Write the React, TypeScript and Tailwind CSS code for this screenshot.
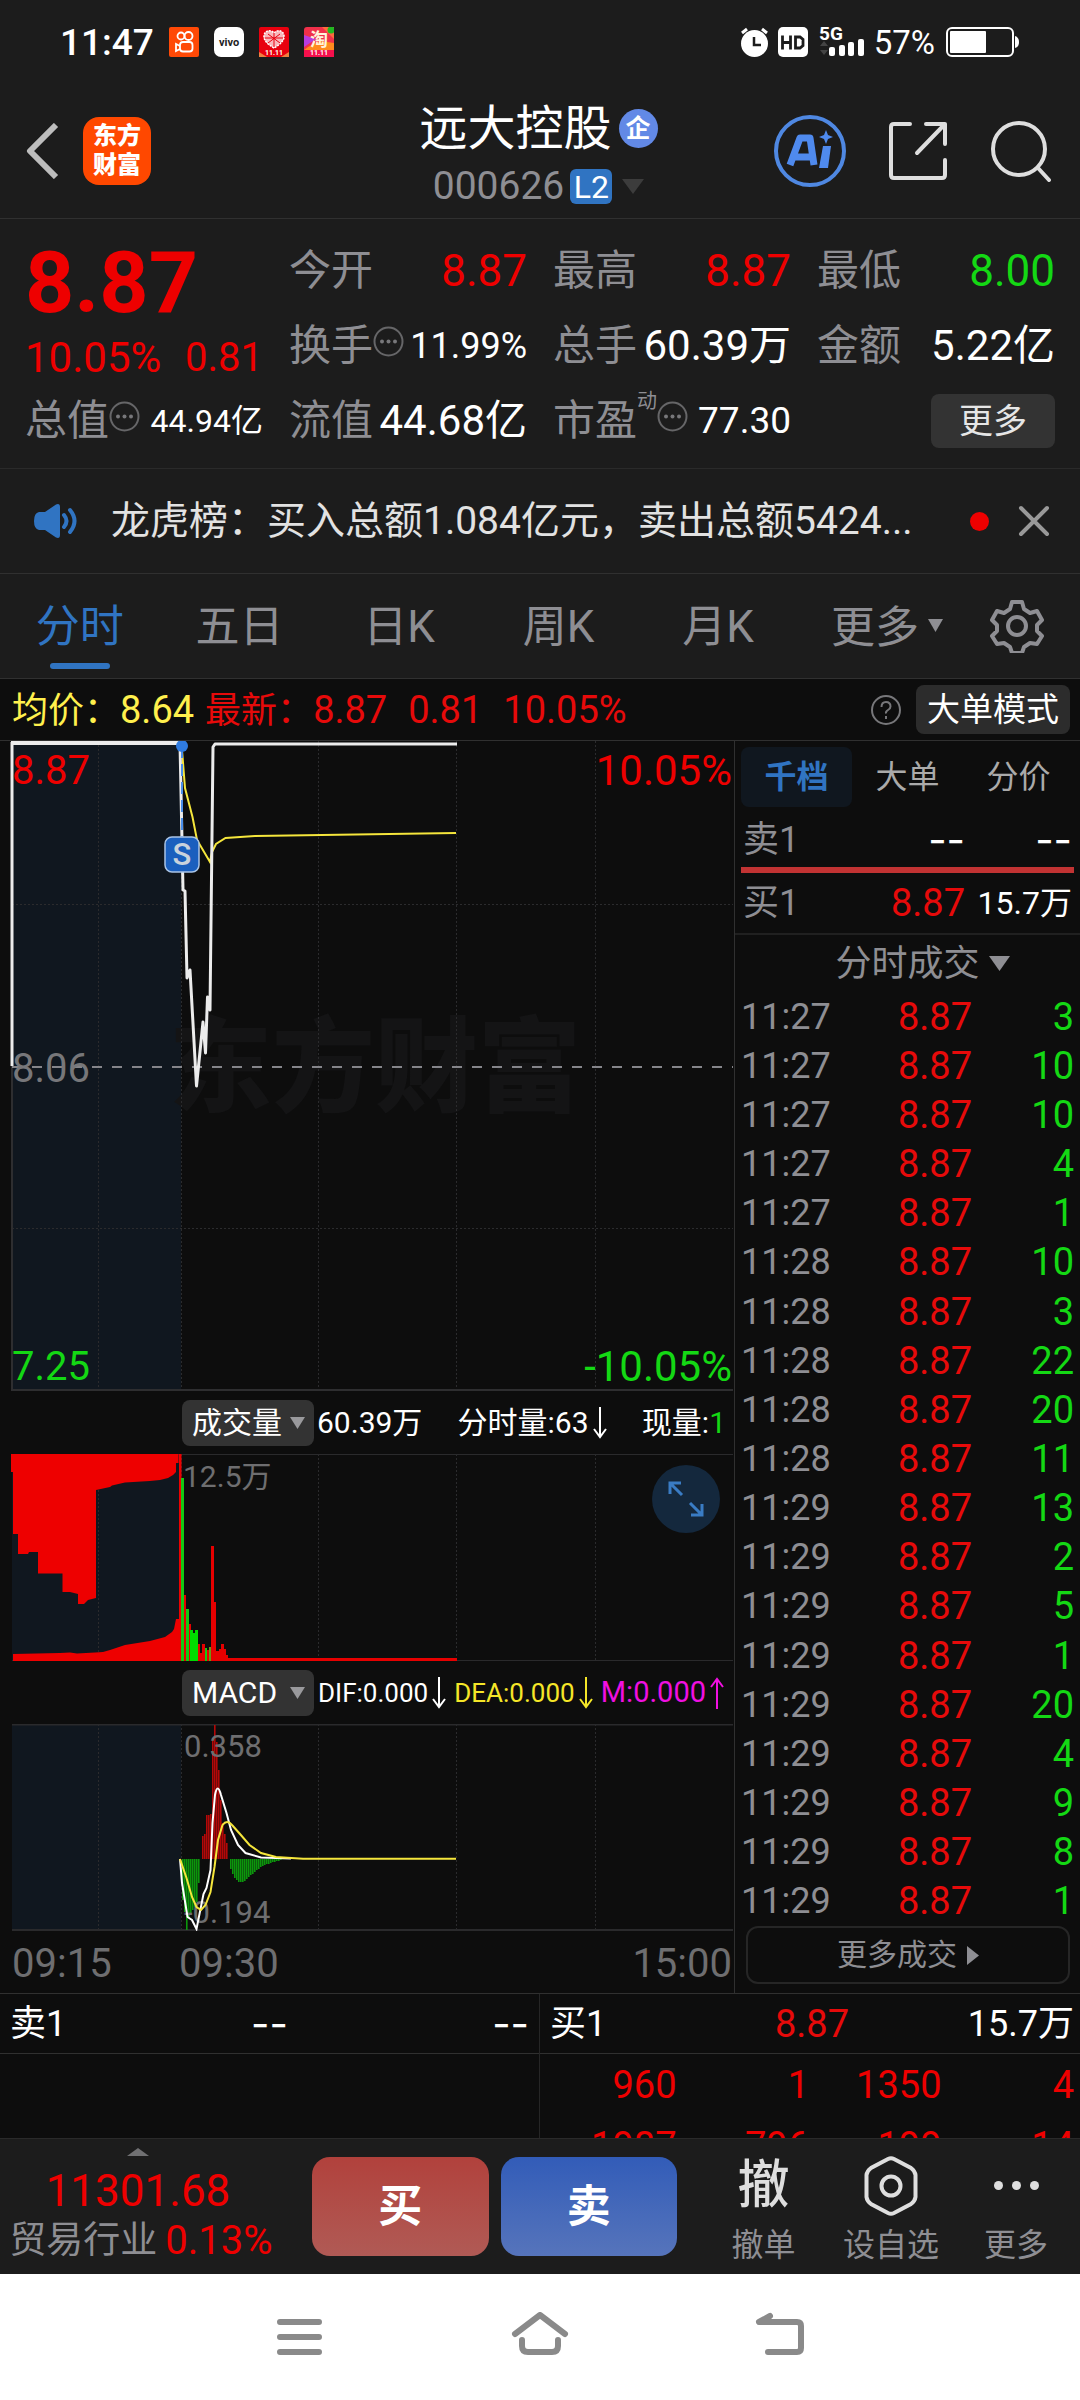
import type { ReactNode } from 'react';

const trades = [
  { time: '11:27', price: '8.87', volume: 3 },
  { time: '11:27', price: '8.87', volume: 10 },
  { time: '11:27', price: '8.87', volume: 10 },
  { time: '11:27', price: '8.87', volume: 4 },
  { time: '11:27', price: '8.87', volume: 1 },
  { time: '11:28', price: '8.87', volume: 10 },
  { time: '11:28', price: '8.87', volume: 3 },
  { time: '11:28', price: '8.87', volume: 22 },
  { time: '11:28', price: '8.87', volume: 20 },
  { time: '11:28', price: '8.87', volume: 11 },
  { time: '11:29', price: '8.87', volume: 13 },
  { time: '11:29', price: '8.87', volume: 2 },
  { time: '11:29', price: '8.87', volume: 5 },
  { time: '11:29', price: '8.87', volume: 1 },
  { time: '11:29', price: '8.87', volume: 20 },
  { time: '11:29', price: '8.87', volume: 4 },
  { time: '11:29', price: '8.87', volume: 9 },
  { time: '11:29', price: '8.87', volume: 8 },
  { time: '11:29', price: '8.87', volume: 1 },
];

const buyQueue = [
  ['960', '1', '1350', '4'],
  ['1987', '796', '199', '14'],
];

const periods = ['分时', '五日', '日K', '周K', '月K'];

// [x, width, top, color]
const volumeBars: [number, number, number, string][] = [
  [181, 3, 24, '#14c814'],
  [184, 2, 141, '#e60000'],
  [186, 3, 155, '#14c814'],
  [189, 2, 170, '#e60000'],
  [190, 3, 176, '#00dc00'],
  [193, 2, 179, '#00dc00'],
  [195, 3, 176, '#00dc00'],
  [198, 2, 190, '#e60000'],
  [200, 2, 199, '#e60000'],
  [202, 3, 190, '#e60000'],
  [205, 2, 194, '#14c814'],
  [207, 2, 196, '#e60000'],
  [209, 2, 193, '#6e9614'],
  [211, 3, 92, '#e60000'],
  [214, 2, 148, '#e60000'],
  [216, 3, 197, '#e60000'],
  [219, 2, 195, '#e60000'],
  [221, 3, 190, '#e60000'],
  [224, 2, 195, '#e60000'],
  [226, 2, 201, '#e60000'],
  [228, 229, 204, '#e60000'],
];

// [x, y] where y is the far end of the bar from the zero line at 135
const macdUp: [number, number][] = [
  [203, 112], [205, 110], [207, 91], [209, 91], [211, 90], [213, 14], [215, 1],
  [217, 18], [219, 46], [221, 76], [223, 99], [225, 110], [227, 119],
];
const macdDown: [number, number][] = [
  [183, 176], [185, 188], [187, 206], [189, 194], [191, 190], [193, 186], [195, 183], [197, 178], [199, 159],
  [231, 145], [233, 150], [235, 154], [237, 156], [239, 158], [241, 158], [243, 158], [245, 157], [247, 155],
  [249, 153], [251, 151], [253, 150], [255, 148], [257, 146], [259, 145], [261, 143], [263, 142], [265, 141],
  [267, 140], [269, 140], [271, 139], [273, 138], [275, 138], [277, 137], [279, 137], [281, 136],
];

function GridLines({ height, rows = [] }: { height: number; rows?: number[] }) {
  return (
    <g stroke="#2b2b2d" strokeWidth="1" strokeDasharray="2 2">
      {[98, 181, 318, 456, 595].map(x => (
        <line key={x} x1={x + 0.5} x2={x + 0.5} y1="0" y2={height} />
      ))}
      {rows.map(y => (
        <line key={y} x1="12" x2="733" y1={y + 0.5} y2={y + 0.5} />
      ))}
    </g>
  );
}

function MoreDots() {
  return (
    <svg className="mb-2 h-[31px] w-[31px] shrink-0" viewBox="0 0 31 31" fill="#77777a">
      <circle cx="15.5" cy="15.5" r="14" fill="none" stroke="#666668" strokeWidth="2" />
      <circle cx="9" cy="15.5" r="2" />
      <circle cx="15.5" cy="15.5" r="2" />
      <circle cx="22" cy="15.5" r="2" />
    </svg>
  );
}

function Quote({ label, children }: { label: ReactNode; children?: ReactNode }) {
  return (
    <div className="flex h-[75px] items-center justify-between whitespace-nowrap">
      <span className="flex items-center text-[42px] text-[#8e8e93]">{label}</span>
      {children}
    </div>
  );
}

function IndicatorSelect({ label, name }: { label: string; name: string }) {
  return (
    <label className="relative flex h-[46px] w-[132px] shrink-0 items-center rounded-lg bg-[#333]">
      <select aria-label={label} className="h-full w-full appearance-none bg-transparent pl-[10px] text-[30px] leading-none text-white outline-none">
        <option>{name}</option>
      </select>
      <svg className="pointer-events-none absolute right-[9px] h-3 w-[15px]" viewBox="0 0 15 12" fill="#99999c">
        <path d="M0 0h15L7.500 12z" />
      </svg>
    </label>
  );
}

function Arrow({ up = false }: { up?: boolean }) {
  return (
    <svg className="h-[32px] w-[14px] shrink-0" viewBox="0 0 14 32" fill="none" stroke="currentColor" strokeWidth="2">
      {up ? <path d="M7 32V2M1 10l6-8 6 8" /> : <path d="M7 0v30M1 22l6 8 6-8" />}
    </svg>
  );
}

function StatusBar() {
  return (
    <div className="flex h-[84px] items-center justify-between pl-[60px] pr-[61px]">
      <div className="flex items-center gap-[15px]">
        <span className="text-[37px] font-medium">11:47</span>
        <svg className="h-[30px] w-[30px]" viewBox="0 0 30 30">
          <rect width="30" height="30" rx="2" fill="#ff4906" />
          <g fill="none" stroke="#fff" strokeWidth="1.8">
            <circle cx="12" cy="9" r="3.500" />
            <circle cx="19.500" cy="9" r="4" />
            <rect x="11" y="15" width="12.500" height="9.500" rx="3" />
            <path d="M11 19l-4-2v7l4-2" />
          </g>
        </svg>
        <svg className="h-[30px] w-[30px]" viewBox="0 0 30 30">
          <rect width="30" height="30" rx="7" fill="#fff" />
          <text x="15" y="18.500" textAnchor="middle" fontSize="11" fontWeight="700" fill="#222">vivo</text>
        </svg>
        <svg className="h-[30px] w-[30px]" viewBox="0 0 30 30">
          <rect width="30" height="30" rx="2" fill="#e8000e" />
          <path d="M0 30v-5l8 5zM30 30v-5l-8 5z" fill="#f08040" />
          <path d="M15 21C8 17 4.500 13 5 8.500 6 3 12 2.500 15 6c3-3.500 9-3 10 2.500C25.500 13 22 17 15 21z" fill="#f8b8bc" stroke="#fff" strokeDasharray="2 1" strokeWidth="1.500" />
          <path d="M9 7l12 9M21 7L9 16M15 6v14M6 11h18" stroke="#e8000e" />
          <text x="15" y="28" textAnchor="middle" fontSize="7" fontWeight="700" fill="#fff">11.11</text>
        </svg>
        <svg className="h-[30px] w-[30px]" viewBox="0 0 30 30">
          <rect width="30" height="30" rx="3" fill="#f0304a" />
          <path d="M0 8l12 4L0 20z" fill="#b83ce0" />
          <path d="M4 20l12-6 14 2v7H0z" fill="#ff8a1e" />
          <path d="M18 0h12v12z" fill="#ff6a3c" />
          <circle cx="27" cy="3" r="3.500" fill="#20b820" />
          <rect y="23" width="30" height="7" fill="#f5104c" />
          <text x="15" y="19" textAnchor="middle" fontSize="18" fontWeight="700" fill="#fff4dc">淘</text>
          <text x="15" y="28" textAnchor="middle" fontSize="7" fontWeight="700" fill="#fff">11.11</text>
        </svg>
      </div>
      <div className="flex items-center">
        <svg className="h-[30px] w-[29px]" viewBox="0 0 29 30">
          <circle cx="14.500" cy="16.500" r="13.500" fill="#fff" />
          <path d="M2 6l5-4M27 6l-5-4" stroke="#fff" strokeWidth="3" />
          <path d="M14 10v8h7" fill="none" stroke="#1c1c1c" strokeWidth="2.500" />
        </svg>
        <svg className="ml-[9px] h-[30px] w-[30px]" viewBox="0 0 30 30">
          <rect width="30" height="30" rx="5" fill="#fff" />
          <path d="M4.500 8.500v14M12.500 8.500v14M4.500 15.500h8M17.500 10v11h4.500l3-2.500v-6L22 10z" fill="none" stroke="#1c1c1c" strokeWidth="2.800" />
        </svg>
        <svg className="ml-[11px] h-[35px] w-[46px] pb-1" viewBox="0 0 46 31" fill="#fff" overflow="visible">
          <text x="0" y="15" fontSize="19" fontWeight="700">5G</text>
          <path d="M1 21l4-5 4 5zM1 25l4 5 4-5z" fill="#444" />
          <rect x="10" y="22" width="6" height="9" rx="2" />
          <rect x="20" y="20" width="6" height="11" rx="2" />
          <rect x="29" y="17" width="6" height="14" rx="2" />
          <rect x="39" y="14" width="6" height="17" rx="2" />
        </svg>
        <span className="ml-[9px] text-[33px]">57%</span>
        <svg className="ml-[11px] h-[30px] w-[73px]" viewBox="0 0 73 30">
          <rect x="1" y="1" width="66" height="28" rx="5" fill="none" stroke="#fff" strokeWidth="2" />
          <rect x="4" y="4" width="36" height="22" rx="1" fill="#fff" />
          <path d="M69 9c3 1 4 3 4 6s-1 5-4 6z" fill="#fff" />
        </svg>
      </div>
    </div>
  );
}

function Header() {
  return (
    <header className="flex h-[135px] items-center border-b border-[#303030] pl-[26px] pr-[29px]">
      <div className="flex flex-1 items-center gap-[24px]">
        <button aria-label="返回">
          <svg className="h-[56px] w-[33px]" viewBox="0 0 33 56" fill="none" stroke="#bdbdbd" strokeWidth="6" strokeLinejoin="round">
            <path d="M30 2L4 28l26 26" />
          </svg>
        </button>
        <div className="flex h-[68px] w-[68px] flex-col items-center justify-center rounded-[16px] bg-[#ff4800] text-[24px] font-black leading-[29px]">
          <span>东方</span>
          <span>财富</span>
        </div>
      </div>
      <div className="flex flex-col items-center pt-[13px]">
        <div className="flex h-[58px] items-center gap-[7px]">
          <h1 className="text-[48px] font-normal leading-none">远大控股</h1>
          <span className="flex h-[39px] w-[39px] items-center justify-center rounded-full bg-[#6289e6] text-[25px] font-bold">企</span>
        </div>
        <div className="flex h-[58px] items-center gap-[6px]">
          <span className="text-[39px] text-[#8e8e93]">000626</span>
          <span className="flex h-[35px] w-[42px] items-center justify-center rounded-md bg-[#3074c2] text-[32px]">L2</span>
          <svg className="ml-1 h-[15px] w-[22px]" viewBox="0 0 22 15" fill="#3c3c3c">
            <path d="M0 0h22L11 15z" />
          </svg>
        </div>
      </div>
      <div className="flex flex-1 items-center justify-end gap-[41px]">
        <button aria-label="Ai">
          <svg className="h-[74px] w-[74px]" viewBox="0 0 74 74">
            <circle cx="37" cy="37" r="34" fill="none" stroke="#4f88e2" strokeWidth="4" />
            <path
              d="M17 51L27 24h10l4 27M22 43h17"
              fill="none"
              stroke="#4f8aee"
              strokeWidth="7"
              strokeLinejoin="round"
            />
            <path d="M50 32h8l-3 22h-9z" fill="#4f8aee" />
            <path d="M53 16l2 5 5 2-5 2-2 5-2-5-5-2 5-2z" fill="#4f8aee" />
          </svg>
        </button>
        <button aria-label="分享">
          <svg className="h-[60px] w-[60px]" viewBox="0 0 60 60" fill="none" stroke="#dedede" strokeWidth="4" strokeLinecap="round" strokeLinejoin="round">
            <path d="M22 3H6q-3 0-3 3v48q0 3 3 3h48q3 0 3-3V39" />
            <path d="M38 3h19v20M57 3L29 32" />
          </svg>
        </button>
        <button aria-label="搜索">
          <svg className="h-[62px] w-[62px]" viewBox="0 0 62 62" fill="none" stroke="#dedede" strokeWidth="4" strokeLinecap="round">
            <circle cx="30" cy="29" r="26" />
            <path d="M49 48l11 12" />
          </svg>
        </button>
      </div>
    </header>
  );
}

function QuotePanel() {
  return (
    <section className="grid h-[250px] grid-cols-4 gap-x-[26px] border-b border-[#2a2a2a] px-[25px] pt-[14px]">
      <div>
        <p className="flex h-[100px] items-center text-[86px] font-bold text-[#ee0000]">8.87</p>
        <p className="flex h-[50px] items-center justify-between text-[#ee0000]">
          <span className="text-[42px]">10.05%</span>
          <span className="text-[40px]">0.81</span>
        </p>
        <Quote label={<>总值<MoreDots /></>}>
          <span className="text-[32px]">44.94亿</span>
        </Quote>
      </div>
      <div>
        <Quote label="今开"><span className="text-[44px] text-[#ee0000]">8.87</span></Quote>
        <Quote label={<>换手<MoreDots /></>}><span className="text-[36px]">11.99%</span></Quote>
        <Quote label="流值"><span className="text-[42px]">44.68亿</span></Quote>
      </div>
      <div>
        <Quote label="最高"><span className="text-[44px] text-[#ee0000]">8.87</span></Quote>
        <Quote label="总手"><span className="text-[42px]">60.39万</span></Quote>
        <Quote label={<>市盈<sup className="-top-5 text-[20px]">动</sup><MoreDots /></>}>
          <span className="text-[37px]">77.30</span>
        </Quote>
      </div>
      <div>
        <Quote label="最低"><span className="text-[44px] text-[#14d814]">8.00</span></Quote>
        <Quote label="金额"><span className="text-[42px]">5.22亿</span></Quote>
        <Quote label="">
          <button className="h-[54px] w-[124px] rounded-lg bg-[#333] text-[34px] text-[#e6e6e6]">更多</button>
        </Quote>
      </div>
    </section>
  );
}

function NewsBar() {
  return (
    <section className="flex h-[105px] items-center border-b border-[#303030] pl-[34px] pr-[30px]">
      <svg className="h-[36px] w-[44px] shrink-0" viewBox="0 0 44 36">
        <path d="M5 9h6L22 1.500Q26 0 26 4v28q0 4-4 2.500L11 27H5q-5-1-5-9t5-9z" fill="#3074c2" />
        <path d="M30 12q5 6 0 12M36 7q9 11 0 22" fill="none" stroke="#3074c2" strokeWidth="4" strokeLinecap="round" />
      </svg>
      <a href="#news" className="ml-[33px] min-w-0 flex-1 truncate text-[39px] leading-[60px] text-[#e2e2e2]">
        龙虎榜：买入总额1.084亿元，卖出总额5424...
      </a>
      <span className="h-[19px] w-[19px] shrink-0 rounded-full bg-[#ee0000]" />
      <button aria-label="关闭" className="ml-[29px]">
        <svg className="h-[32px] w-[32px]" viewBox="0 0 32 32" stroke="#999" strokeWidth="4" strokeLinecap="round">
          <path d="M3 3l26 26M29 3L3 29" />
        </svg>
      </button>
    </section>
  );
}

function PeriodTabs() {
  return (
    <nav className="flex h-[105px] border-b border-[#303030] text-[44px] text-[#8e8e93]">
      {periods.map((period, i) => (
        <button key={period} className={i === 0 ? 'flex-1 text-[#3074c2]' : 'flex-1'}>
          <span className="relative inline-block pb-[6px] pt-[8px] leading-[88px]">
            {period}
            {i === 0 && <span className="absolute inset-x-[14px] bottom-2 h-[6px] rounded-full bg-[#3074c2]" />}
          </span>
        </button>
      ))}
      <button className="flex w-[178px] items-center justify-center gap-[9px] pt-[3px]">
        更多
        <svg className="mb-1 h-[13px] w-[15px]" viewBox="0 0 15 13" fill="#8e8e93">
          <path d="M0 0h15L7.500 13z" />
        </svg>
      </button>
      <button aria-label="设置" className="flex w-[104px] items-center pl-[14px]">
        <svg className="h-[54px] w-[54px]" viewBox="0 0 54 54" fill="none" stroke="#8e8e93" strokeWidth="4" strokeLinejoin="round">
          <path d="M22 3h10l2 7 6 4 7-2 5 9-5 5v6l5 5-5 8-7-1-6 4-2 6H22l-2-6-6-4-7 1-5-8 5-5v-6l-5-5 5-9 7 2 6-4z" />
          <circle cx="27" cy="27" r="9" />
        </svg>
      </button>
    </nav>
  );
}

function AverageBar() {
  return (
    <div className="flex h-[62px] items-center justify-between border-b border-[#303030] pl-3 pr-[10px]">
      <p className="flex items-center text-[38px]">
        <span className="text-[#fff04d]"><span className="text-[36px]">均价：</span>8.64</span>
        <span className="ml-[11px] text-[#e60a0a]"><span className="text-[36px]">最新：</span>8.87</span>
        <span className="ml-[21px] text-[#e60a0a]">0.81</span>
        <span className="ml-[21px] text-[#e60a0a]">10.05%</span>
      </p>
      <div className="flex items-center gap-[14px]">
        <svg className="h-[32px] w-[32px]" viewBox="0 0 32 32" fill="none" stroke="#77777a" strokeWidth="2">
          <circle cx="16" cy="16" r="14" />
          <path d="M11.500 13q0-5 4.500-5t4.500 4.500q0 2-2.500 3.500t-2 3.500M16 22v3" />
        </svg>
        <button className="h-[49px] w-[154px] rounded-lg bg-[#2c2c2c] text-[33px] text-white">大单模式</button>
      </div>
    </div>
  );
}

function PriceChart() {
  return (
    <div className="relative h-[650px] text-[40px] leading-[48px]">
      <svg className="h-full w-full" viewBox="0 0 734 650" preserveAspectRatio="none">
        <rect x="12" width="169" height="650" fill="#10171f" />
        <text x="169" y="363" fontSize="103" fontWeight="900" fill="#141415">东方财富</text>
        <GridLines height={650} rows={[163, 487]} />
        <path d="M12 0v649h721" fill="none" stroke="#2e2e30" strokeWidth="2" />
        <path d="M12 326h721" stroke="#85858a" strokeWidth="2" strokeDasharray="10 10" />
        <path d="M182 9l3 38 7.500 29 4.500 23 13 22 2-10 4-8 9.500-6 29.500-2 201-3" fill="none" stroke="#f5e63c" strokeWidth="2" />
        <path d="M12 325V1" stroke="#ececec" strokeWidth="3" />
        <path d="M11 2h170" stroke="#ececec" strokeWidth="4" />
        <path
          d="M180 2l3 147 2 1 2 87 3-8 6.500 116 6.500-64 2.500 31 2-56 2.500 13 3-263 2-3h242"
          fill="none"
          stroke="#ececec"
          strokeWidth="3"
          strokeLinejoin="round"
        />
        <path d="M182 5v125" stroke="#4a8ee8" strokeWidth="2" strokeDasharray="12 6" />
        <circle cx="182" cy="5" r="6" fill="#2f7be0" />
        <rect x="165" y="96" width="34" height="35" rx="7" fill="#1a5fbe" stroke="#a9c4e6" strokeWidth="1.500" />
        <text x="182" y="124" textAnchor="middle" fontSize="31" fontWeight="500" fill="#c9d2dc">S</text>
      </svg>
      <span className="absolute left-3 top-[6px] text-[#ee0000]">8.87</span>
      <span className="absolute right-[2px] top-[6px] text-[42px] text-[#ee0000]">10.05%</span>
      <span className="absolute left-3 top-[304px] text-[#77777a]">8.06</span>
      <span className="absolute bottom-0 left-3 text-[#14d814]">7.25</span>
      <span className="absolute bottom-0 right-[2px] text-[42px] text-[#14d814]">-10.05%</span>
    </div>
  );
}

function VolumeChart() {
  return (
    <div className="relative h-[207px]">
      <svg className="h-full w-full" viewBox="0 0 734 207" preserveAspectRatio="none">
        <rect x="12" width="169" height="207" fill="#10171f" />
        <GridLines height={207} />
        <path d="M12 .5h721M12 206.500h721" stroke="#2a2a2c" />
        <path
          d="M11 0v18h2v62h5v20h10l1-2h9v21.500h24.500V138H70l8 2v10h6l4-4 4-1 4-1V36l14-3 2-1.500 13-3 25-1.500 10-1 8-2 5-3 3-3v-9h2.500V0z"
          fill="#ee0000"
        />
        <path
          d="M13 207v-7l47-1 10-.5 7 1 18-1 8-.5 7-2 15-5 25-4 15-4 7-5 2-3 2-10h3V0h2.500v207z"
          fill="#ee0000"
        />
        {volumeBars.map(([x, width, top, color]) => (
          <rect key={x} x={x} y={top} width={width} height={207 - top} fill={color} />
        ))}
      </svg>
      <span className="absolute left-[183px] top-2 text-[30px] leading-[30px] text-[#6e6e70]">12.5万</span>
      <button aria-label="全屏" className="absolute right-[14px] top-[11px] flex h-[68px] w-[68px] items-center justify-center rounded-full bg-[#14283d]">
        <svg className="h-[36px] w-[36px]" viewBox="0 0 36 36" fill="none" stroke="#3a7cc4" strokeWidth="3">
          <path d="M2 13V2h11M2 2l12 12M34 23v11H23M34 34L22 22" />
        </svg>
      </button>
    </div>
  );
}

function MacdChart() {
  return (
    <div className="relative h-[207px] text-[31px] leading-[31px] text-[#6e6e70]">
      <svg className="h-full w-full" viewBox="0 0 734 207" preserveAspectRatio="none">
        <rect x="12" width="169" height="207" fill="#10171f" />
        <GridLines height={207} />
        <path d="M12 .5h721M12 206h721" stroke="#2a2a2c" strokeWidth="2" />
        {macdUp.map(([x, y]) => (
          <rect key={x} x={x - 1} y={y} width="1.6" height={135 - y} fill="#b40808" />
        ))}
        {macdDown.map(([x, y]) => (
          <rect key={x} x={x - 1} y="135" width="1.6" height={y - 135} fill="#0c960c" />
        ))}
      </svg>
      <span className="absolute left-[184px] top-[7px]">0.358</span>
      <span className="absolute bottom-[3px] left-[184px]">-0.194</span>
      <svg className="absolute inset-0 h-full w-full" viewBox="0 0 734 207" preserveAspectRatio="none" fill="none" strokeWidth="2">
        <path
          d="M180 135L182 159 187.500 193 192 196 196.500 205 203.500 170 206.500 164 210.500 146 212.500 99 215 71Q217.500 58 221 71L226.500 89 231 106 238 121 245.500 129 261 133.500 291 134.500"
          stroke="#fff"
        />
        <path
          d="M180 135L186.500 154 192 173 196.500 183 201 186 205.500 181 210.500 168 214.500 143 218 116 222.500 101Q227 95 232 101L240 110 249.500 121 261 129 276 133 303 134.700 456 134.700"
          stroke="#f5e63c"
        />
      </svg>
    </div>
  );
}

function ChartPanel() {
  return (
    <div className="min-w-0 flex-1 border-r border-[#303030]">
      <PriceChart />
      <div className="flex h-[63px] items-center whitespace-nowrap pl-[182px] pr-[8px] text-[30px]">
        <IndicatorSelect label="成交量指标" name="成交量" />
        <div className="flex flex-1 items-center justify-between pl-[3px]">
          <span>60.39万</span>
          <span className="flex items-center gap-1">分时量:63<Arrow /></span>
          <span>现量:<span className="text-[#14d814]">1</span></span>
        </div>
      </div>
      <VolumeChart />
      <div className="flex h-[63px] items-center whitespace-nowrap pl-[182px] pr-[10px] text-[26px]">
        <IndicatorSelect label="技术指标" name="MACD" />
        <div className="flex flex-1 items-center justify-between pl-[4px]">
          <span className="flex items-center gap-1">DIF:0.000<Arrow /></span>
          <span className="flex items-center gap-1 text-[#f5e628]">DEA:0.000<Arrow /></span>
          <span className="flex items-center gap-1 text-[29px] text-[#f010e0]">M:0.000<Arrow up /></span>
        </div>
      </div>
      <MacdChart />
      <div className="flex h-[62px] items-center pl-3 pr-[2px] pt-1 text-[40px] text-[#6e6e70]">
        <span className="w-[167px]">09:15</span>
        <span className="flex-1">09:30</span>
        <span>15:00</span>
      </div>
    </div>
  );
}

function DepthPanel() {
  return (
    <aside className="flex w-[345px] shrink-0 flex-col">
      <div className="grid h-[72px] grid-cols-3 p-[6px] text-[32px] text-[#aaa]">
        <button className="rounded-lg bg-[#10171f] font-bold text-[#3074c2]">千档</button>
        <button>大单</button>
        <button>分价</button>
      </div>
      <div className="grid h-[54px] grid-cols-[1fr_132px_107px] items-center px-2 text-right text-[36px]">
        <span className="text-left text-[#8e8e93]">卖1</span>
        <span className="font-['Inter'] text-[40px]">--</span>
        <span className="font-['Inter'] text-[40px]">--</span>
      </div>
      <div className="mx-[6px] h-[6px] bg-[#c23333]" />
      <div className="grid h-[62px] grid-cols-[1fr_132px_107px] items-center border-b-2 border-[#202020] px-2 text-right text-[38px]">
        <span className="text-left text-[36px] text-[#8e8e93]">买1</span>
        <span className="text-[#e60a0a]">8.87</span>
        <span className="text-[32px]">15.7万</span>
      </div>
      <label className="flex h-[57px] items-center justify-center gap-2 pl-[30px] text-[#8e8e93]">
        <select aria-label="成交明细" className="appearance-none bg-transparent text-[36px] leading-[44px] outline-none">
          <option>分时成交</option>
        </select>
        <svg className="h-[15px] w-[21px]" viewBox="0 0 21 15" fill="#8e8e93">
          <path d="M0 0h21L10.500 15z" />
        </svg>
      </label>
      <table className="h-[934px] w-full text-[38px] leading-none">
        <tbody>
          {trades.map((trade, i) => (
            <tr key={i}>
              <td className="w-[127px] p-0 pl-[6px] text-[36px] text-[#8e8e93]">{trade.time}</td>
              <td className="w-[110px] p-0 text-right text-[#e60a0a]">{trade.price}</td>
              <td className="p-0 pr-[6px] text-right text-[#14d814]">{trade.volume}</td>
            </tr>
          ))}
        </tbody>
      </table>
      <button className="mb-[9px] ml-[11px] mr-[10px] flex h-[58px] items-center justify-center gap-[10px] rounded-xl border-2 border-[#262626] text-[30px] text-[#8e8e93]">
        更多成交
        <svg className="h-[19px] w-[12px]" viewBox="0 0 12 19" fill="#8e8e93">
          <path d="M0 0v19L12 9.500z" />
        </svg>
      </button>
    </aside>
  );
}

function OrderBook() {
  return (
    <section className="grid h-[145px] grid-cols-2 overflow-hidden border-t border-[#303030] text-[36px]">
      <div className="border-r border-[#262626]">
        <div className="grid h-[60px] grid-cols-3 items-center border-b border-[#303030] px-[10px]">
          <span>卖1</span>
          <span className="text-center font-['Inter'] text-[40px]">--</span>
          <span className="text-right font-['Inter'] text-[40px]">--</span>
        </div>
      </div>
      <div>
        <div className="grid h-[60px] grid-cols-3 items-center border-b border-[#303030] pl-[10px] pr-[6px]">
          <span>买1</span>
          <span className="text-center text-[38px] text-[#e60a0a]">8.87</span>
          <span className="text-right">15.7万</span>
        </div>
        <div className="pl-[10px]">
          <table className="w-full table-fixed text-[38px] text-[#ee0000]">
            <tbody>
              {buyQueue.map((row, i) => (
                <tr key={i} className="h-[61px]">
                  {row.map((value, j) => (
                    <td key={j} className="p-0 pr-[6px] text-right leading-none">{value}</td>
                  ))}
                </tr>
              ))}
            </tbody>
          </table>
        </div>
      </div>
    </section>
  );
}

function ActionBar() {
  return (
    <footer className="flex h-[136px] items-center border-t border-[#2a2a2a] bg-[#1c1c1c] pr-[20px]">
      <a href="#industry" className="flex w-[276px] flex-col items-center whitespace-nowrap">
        <svg className="h-[8px] w-[22px]" viewBox="0 0 22 8" fill="#707072">
          <path d="M0 8h22L11 0z" />
        </svg>
        <span className="mt-[10px] text-[44px] leading-[50px] text-[#ee0000]">11301.68</span>
        <span className="flex items-center gap-[8px] pl-[6px] text-[37px] leading-[50px] text-[#8e8e93]">
          贸易行业
          <span className="text-[40px] text-[#ee0000]">0.13%</span>
        </span>
      </a>
      <div className="ml-[36px] flex flex-1 gap-3">
        <button className="h-[99px] flex-1 rounded-[18px] bg-linear-to-b from-[#b1413c] to-[#b05a55] text-[44px] font-bold">买</button>
        <button className="h-[99px] flex-1 rounded-[18px] bg-linear-to-b from-[#325cb8] to-[#5674bb] text-[44px] font-bold">卖</button>
      </div>
      <div className="ml-[40px] flex text-[32px] text-[#8e8e93]">
        <button className="flex w-[93px] flex-col items-center gap-[10px]">
          <span className="flex h-[66px] items-center text-[52px] font-medium text-[#dedede]">撤</span>
          <span>撤单</span>
        </button>
        <button className="flex w-[162px] flex-col items-center gap-[10px]">
          <span className="flex h-[66px] items-center">
            <svg className="h-[60px] w-[54px]" viewBox="0 0 54 60" fill="none" stroke="#dedede" strokeWidth="4">
              <path d="M24 3q3-1.500 6 0l17 9q4 3 4.500 7v22q-.5 4-4.500 7l-17 9q-3 1.500-6 0L7 48q-4-3-4.500-7V19Q3 15 7 12z" />
              <circle cx="27" cy="30" r="9.500" />
            </svg>
          </span>
          <span>设自选</span>
        </button>
        <button className="flex w-[88px] flex-col items-center gap-[10px]">
          <span className="flex h-[66px] items-center gap-[9px]">
            <span className="h-[9px] w-[9px] rounded-full bg-[#dedede]" />
            <span className="h-[9px] w-[9px] rounded-full bg-[#dedede]" />
            <span className="h-[9px] w-[9px] rounded-full bg-[#dedede]" />
          </span>
          <span>更多</span>
        </button>
      </div>
    </footer>
  );
}

function SystemNav() {
  return (
    <nav className="flex h-[126px] items-center justify-center gap-[180px] bg-white">
      <button aria-label="最近任务">
        <svg className="h-[50px] w-[60px]" viewBox="0 0 60 50" stroke="#8a8a8a" strokeWidth="6" strokeLinecap="round">
          <path d="M10 10h39M10 25h39M10 40h39" />
        </svg>
      </button>
      <button aria-label="主页">
        <svg className="h-[50px] w-[60px]" viewBox="0 0 60 50" fill="none" stroke="#8a8a8a" strokeWidth="6" strokeLinecap="round" strokeLinejoin="round">
          <path d="M5 22L30 3l25 19M12 28v6q0 6 6 6h24q6 0 6-6v-6" />
        </svg>
      </button>
      <button aria-label="返回上一页">
        <svg className="h-[50px] w-[60px]" viewBox="0 0 60 50" fill="none" stroke="#8a8a8a" strokeWidth="6" strokeLinecap="round" strokeLinejoin="round">
          <path d="M20 4L9 10h38q4 0 4 4v22q0 4-4 4H18" />
        </svg>
      </button>
    </nav>
  );
}

export default function App() {
  return (
    <div className="min-h-screen bg-[#0d0d0d] font-['Roboto','Noto_Sans_CJK_SC',sans-serif] leading-none text-white">
      <div className="bg-[#1c1c1c]">
        <StatusBar />
        <Header />
        <QuotePanel />
        <NewsBar />
        <PeriodTabs />
      </div>
      <AverageBar />
      <main className="flex">
        <ChartPanel />
        <DepthPanel />
      </main>
      <OrderBook />
      <ActionBar />
      <SystemNav />
    </div>
  );
}
